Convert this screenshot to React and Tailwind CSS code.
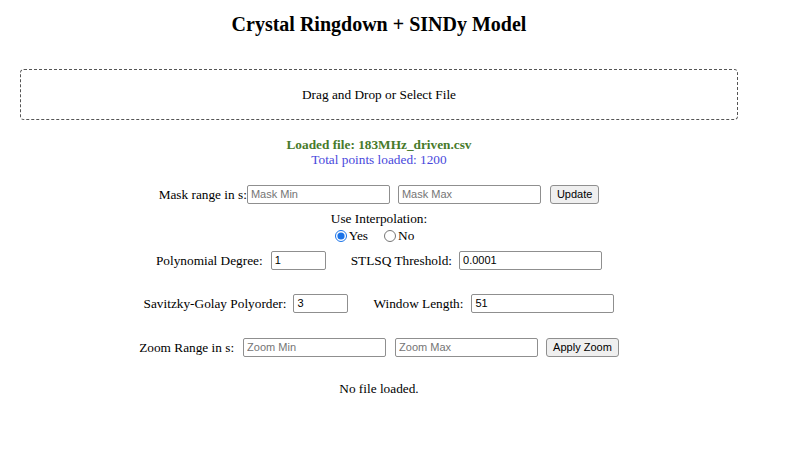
import React, { useState } from 'react';

const inputCls =
  'h-[19px] rounded-[2px] border border-[#8f8f8f] bg-white px-[3px] text-[11px] text-black outline-none placeholder:text-[#757575] [font-family:Arial,"Liberation_Sans",sans-serif]';
const buttonCls =
  'h-[19px] rounded-[3px] border border-[#8f8f8f] bg-[#efefef] px-[6px] text-[11px] text-black [font-family:Arial,"Liberation_Sans",sans-serif]';

export default function App() {
  const [interp, setInterp] = useState('yes');
  const [degree, setDegree] = useState('1');
  const [threshold, setThreshold] = useState('0.0001');
  const [polyorder, setPolyorder] = useState('3');
  const [windowLength, setWindowLength] = useState('51');

  return (
    <div className="min-h-screen bg-white text-black [font-family:'Liberation_Serif','Times_New_Roman',serif]">
      <div className="w-[758px] flex flex-col items-center text-[13.3px] leading-[15px]">
        <h1 className="mt-[11px] text-[20px] leading-[26px] font-bold">Crystal Ringdown + SINDy Model</h1>

        <div className="mt-[32px] w-[718px] h-[51px] flex items-center justify-center rounded-[4px] border border-dashed border-[#555]">
          Drag and Drop or Select File
        </div>

        <div className="mt-[17px] flex flex-col items-center">
          <p className="font-bold text-[#477a2a]">Loaded file: 183MHz_driven.csv</p>
          <p className="text-[#4848dc]">Total points loaded: 1200</p>
        </div>

        <div className="mt-[17px] h-[20px] flex items-center">
          <label>Mask range in s:</label>
          <input className={`${inputCls} w-[143px]`} placeholder="Mask Min" />
          <input className={`${inputCls} w-[143px] ml-[8px]`} placeholder="Mask Max" />
          <button className={`${buttonCls} ml-[9px]`}>Update</button>
        </div>

        <p className="mt-[7px]">Use Interpolation:</p>
        <div className="mt-[2px] pr-[9px] flex items-center">
          <label className="flex items-center">
            <input
              type="radio"
              name="interp"
              checked={interp === 'yes'}
              onChange={() => setInterp('yes')}
              className="m-0 mr-[2px] w-[12px] h-[12px] accent-[#1a73e8]"
            />
            Yes
          </label>
          <label className="flex items-center ml-[16px]">
            <input
              type="radio"
              name="interp"
              checked={interp === 'no'}
              onChange={() => setInterp('no')}
              className="m-0 mr-[2px] w-[12px] h-[12px]"
            />
            No
          </label>
        </div>

        <div className="mt-[7px] h-[20px] flex items-center">
          <label>Polynomial Degree:</label>
          <input className={`${inputCls} w-[55px] ml-[8px]`} value={degree} onChange={(e) => setDegree(e.target.value)} />
          <label className="ml-[25px]">STLSQ Threshold:</label>
          <input className={`${inputCls} w-[143px] ml-[7px]`} value={threshold} onChange={(e) => setThreshold(e.target.value)} />
        </div>

        <div className="mt-[23px] h-[20px] flex items-center">
          <label>Savitzky-Golay Polyorder:</label>
          <input className={`${inputCls} w-[55px] ml-[7px]`} value={polyorder} onChange={(e) => setPolyorder(e.target.value)} />
          <label className="ml-[25px]">Window Length:</label>
          <input className={`${inputCls} w-[143px] ml-[8px]`} value={windowLength} onChange={(e) => setWindowLength(e.target.value)} />
        </div>

        <div className="mt-[24px] h-[20px] flex items-center">
          <label>Zoom Range in s:</label>
          <input className={`${inputCls} w-[143px] ml-[9px]`} placeholder="Zoom Min" />
          <input className={`${inputCls} w-[143px] ml-[9px]`} placeholder="Zoom Max" />
          <button className={`${buttonCls} ml-[8px]`}>Apply Zoom</button>
        </div>

        <p className="mt-[24px]">No file loaded.</p>
      </div>
    </div>
  );
}
